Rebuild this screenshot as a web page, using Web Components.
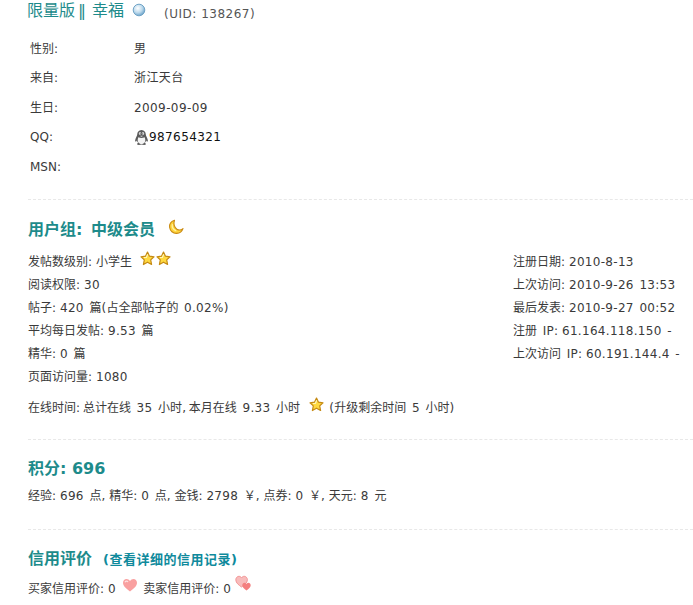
<!DOCTYPE html>
<html lang="zh"><head><meta charset="utf-8">
<style>
html,body{margin:0;padding:0;background:#fff}
body{font:12px/1.2 "DejaVu Sans","Noto Sans CJK SC",sans-serif;color:#3a3a3a;width:693px;height:605px;overflow:hidden}
</style></head><body>
<x-profile>
  <x-title>限量版<span slot="bar">‖</span><span slot="rest">幸福</span><x-ico slot="icon" name="orb"></x-ico><span slot="uid">(UID: 138267)</span></x-title>
  <x-info>
    <x-row label="性别:">男</x-row>
    <x-row label="来自:">浙江天台</x-row>
    <x-row label="生日:">2009-09-09</x-row>
    <x-row label="QQ:"><x-ico name="qq"></x-ico><span style="color:#111">987654321</span></x-row>
    <x-row label="MSN:"></x-row>
  </x-info>
  <x-sep style="--top:17px"></x-sep>
  <x-head style="--top:16px;--h:27px;word-spacing:3px">用户组: 中级会员<x-ico name="moon" style="margin-left:13px;vertical-align:0"></x-ico></x-head>
  <x-cols>
    <x-lines slot="left">
      <div data-w>发帖数级别: 小学生 <x-ico name="star" style="margin-left:2px;vertical-align:0"></x-ico><x-ico name="star" style="margin-left:1px;vertical-align:0"></x-ico></div>
      <div data-w>阅读权限: 30</div>
      <div data-w>帖子: 420 篇(占全部帖子的 0.02%)</div>
      <div data-w>平均每日发帖: 9.53 篇</div>
      <div data-w>精华: 0 篇</div>
      <div data-w>页面访问量: 1080</div>
    </x-lines>
    <x-lines slot="right">
      <div data-w>注册日期: 2010-8-13</div>
      <div data-w>上次访问: 2010-9-26 13:53</div>
      <div data-w>最后发表: 2010-9-27 00:52</div>
      <div data-w>注册 IP: 61.164.118.150 -</div>
      <div data-w>上次访问 IP: 60.191.144.4 -</div>
    </x-lines>
  </x-cols>
  <x-para data-w style="--top:7px;--tight:-1.5px">在线时间: 总计在线 35 小时, 本月在线 9.33 小时 <x-ico name="star" style="margin:0 0 0 3px;vertical-align:0"></x-ico> (升级剩余时间 5 小时)</x-para>
  <x-sep style="--top:22px"></x-sep>
  <x-head style="--top:17px;--h:24px">积分: 696</x-head>
  <x-para data-w style="--top:5px">经验: 696 点, 精华: 0 点, 金钱: 2798 ￥, 点券: 0 ￥, 天元: 8 元</x-para>
  <x-sep style="--top:23px"></x-sep>
  <x-head style="--top:17px;--h:24px">信用评价<a href="#" slot="link">(查看详细的信用记录)</a></x-head>
  <x-para data-w style="--top:4px">买家信用评价: 0 <x-ico name="heart" style="margin:0;vertical-align:1px"></x-ico> 卖家信用评价: 0 <x-ico name="hearts" style="margin-left:-2px;vertical-align:2px"></x-ico></x-para>
</x-profile>
<script>
const ICONS={
orb:[14,14,`<defs><radialGradient id="o" cx=".4" cy=".35" r=".7"><stop offset="0" stop-color="#fff"/><stop offset=".55" stop-color="#bcd9ec"/><stop offset="1" stop-color="#5f9bc4"/></radialGradient></defs><circle cx="7" cy="7" r="5.8" fill="url(#o)" stroke="#6fa3c6"/>`],
qq:[15,17,`<path d="M7.500 1C4.600 1 3.300 3.200 3.200 5.600 3.100 7.200 1.600 9 1.200 11c-.3 1.300.2 2 1 1.400l.7-.8c.2 1 .7 1.800 1.300 2.400-1 .4-1.400 1-1 1.500.7.6 2.800.4 4.300.1 1.500.3 3.600.5 4.300-.1.400-.5 0-1.100-1-1.500.6-.6 1.100-1.400 1.300-2.400l.7.8c.8.6 1.300-.1 1-1.400-.4-2-1.900-3.800-2-5.400C11.700 3.200 10.400 1 7.500 1z" fill="#5c5c5c"/><path d="M4.400 8.200c1.900 1 4.300 1 6.200 0 .8 1.500 1 3.600.2 5-.7 1.200-2 1.800-3.300 1.800s-2.600-.6-3.300-1.800c-.8-1.400-.6-3.500.2-5z" fill="#f4f4f4"/><ellipse cx="6" cy="4.600" rx="1.100" ry="1.400" fill="#fff"/><ellipse cx="9" cy="4.600" rx="1.100" ry="1.400" fill="#fff"/><circle cx="6.200" cy="4.800" r=".6" fill="#222"/><circle cx="8.800" cy="4.800" r=".6" fill="#222"/><path d="M5.800 6.700h3.400L7.500 8z" fill="#c9c9c9"/>`],
moon:[16,16,`<path d="M6.500 1.200C3.200 2.300 1.200 5 1.600 8.300c.4 3.600 3.500 6.300 7.100 6.100 3-.2 5.300-2 6.300-4.800-1.800 1.500-4.200 1.700-6.100.6C6.300 8.700 5.200 4.700 6.500 1.200z" fill="#ffd43a" stroke="#c98a12" stroke-width="1.100" stroke-linejoin="round"/><path d="M4.300 5.500c-.4 2.400.9 5 3.500 6.200" fill="none" stroke="#fff3a8" stroke-width="1.200" stroke-linecap="round"/>`],
star:[15,15,`<path d="M7.500 1l2 4.200 4.500.6-3.300 3.100.9 4.600-4.100-2.300-4.100 2.300.9-4.600L1 5.800l4.500-.6z" fill="#ffd940" stroke="#c58a14" stroke-width="1.200" stroke-linejoin="round"/><path d="M7.500 3.700 6.400 6.500H4.400" fill="none" stroke="#fff6b5" stroke-width="1.200" stroke-linecap="round"/>`],
heart:[16,14,`<path d="M8 13.500C4.800 11 1 8.400 1 4.800 1 2.600 2.700 1 4.500 1 5.900 1 7.200 1.800 8 3.100 8.800 1.800 10.100 1 11.500 1 13.300 1 15 2.600 15 4.800c0 3.600-3.800 6.200-7 8.700z" fill="#f9a0a0"/><path d="M3.200 3.800c.7-.9 1.800-.9 2.500-.3" fill="none" stroke="#fde0e0" stroke-width="1.200" stroke-linecap="round"/>`],
hearts:[17,16,`<path d="M6.500 12C3.800 10 .8 8 .8 4.800.8 2.800 2.300 1.300 3.900 1.300c1.100 0 2 .5 2.700 1.500.6-1 1.600-1.500 2.700-1.500 1.600 0 3.100 1.500 3.100 3.500 0 3.200-3.300 5.200-5.900 7.200z" fill="#f8bcbc" stroke="#f09090" stroke-width=".9"/><path d="M11.500 15.500C9.300 13.900 7.300 12.400 7.300 10.200 7.300 8.800 8.400 7.800 9.500 7.800c.8 0 1.500.4 2 1.200.5-.8 1.200-1.200 2-1.200 1.100 0 2.200 1 2.200 2.400 0 2.200-2 3.700-4.200 5.300z" fill="#f47f7f"/>`]
};
function def(name,html,init){customElements.define(name,class extends HTMLElement{constructor(){super();this.attachShadow({mode:'open'}).innerHTML=html;}connectedCallback(){init&&init(this)}})}
def('x-profile',`<style>:host{display:block;padding-left:28px}</style><slot></slot>`);
def('x-title',`<style>:host{display:flex;align-items:center;height:21px;margin-left:-1px;font-size:16px;color:#1d8b8b;white-space:nowrap}
::slotted([slot=bar]){margin:0 6px 0 3px}
::slotted(x-ico){margin:-1px 0 0 8px}
::slotted([slot=uid]){font-size:12px;color:#555;margin-left:18px;margin-top:8px;letter-spacing:.5px}</style><slot></slot><slot name="bar"></slot><slot name="rest"></slot><slot name="icon"></slot><slot name="uid"></slot>`);
def('x-info',`<style>:host{display:block;padding-top:13px}</style><slot></slot>`);
def('x-row',`<style>:host{display:flex;align-items:center;height:29.5px;padding-left:2px;color:#3a3a3a;white-space:nowrap;letter-spacing:.4px}
#l{width:104px;letter-spacing:0}#v{display:flex;align-items:center}</style><span id="l"></span><span id="v"><slot></slot></span>`,e=>e.shadowRoot.getElementById('l').textContent=e.getAttribute('label'));
def('x-sep',`<style>:host{display:block;height:0;border-top:1px dashed #e8e8e8;margin-top:var(--top,18px)}</style>`);
def('x-head',`<style>:host{display:block;margin-top:var(--top);height:var(--h);line-height:var(--h);font-size:16px;font-weight:bold;color:#1d8b8b;white-space:nowrap}
::slotted(a){font-size:13px;letter-spacing:.5px;color:#0f8a9c;text-decoration:none;margin-left:11px}
::slotted(x-ico){word-spacing:0}</style><slot></slot><slot name="link"></slot>`);
def('x-cols',`<style>:host{display:flex;margin-top:8px}#a{width:485px;flex:none}</style><div id="a"><slot name="left"></slot></div><div><slot name="right"></slot></div>`);
def('x-lines',`<style>:host{display:block;white-space:nowrap;color:#3a3a3a}::slotted(div){height:23.2px;line-height:23.2px}</style><slot></slot>`);
def('x-para',`<style>:host{display:block;margin-top:var(--top);height:20px;line-height:20px;color:#3a3a3a;white-space:nowrap}</style><slot></slot>`);
def('x-ico',`<style>:host{display:inline-block;vertical-align:-1px;line-height:0}svg{display:block}</style><span id="s"></span>`,e=>{const[w,h,p]=ICONS[e.getAttribute('name')];e.shadowRoot.getElementById('s').innerHTML=`<svg width="${w}" height="${h}" viewBox="0 0 ${w} ${h}">${p}</svg>`});
def('x-n',`<style>:host{display:inline;letter-spacing:.3px;word-spacing:1.5px}:host([tight]){word-spacing:var(--tight,-.5px)}</style><slot></slot>`);
// Latin runs are spaced a little wider than the CJK text around them; a space after , or : stays tight
document.querySelectorAll('[data-w]').forEach(el=>{
  [...el.childNodes].filter(n=>n.nodeType===3).forEach(n=>{
    const f=document.createDocumentFragment();
    n.textContent.split(/([\x20-\x7e]+)/).forEach((t,i)=>{
      if(!t)return;
      if(i%2===0){f.append(t);return}
      t.split(/([,:] )/).forEach((p,j)=>{
        if(!p)return;
        const x=document.createElement('x-n');x.textContent=p;
        if(j%2)x.setAttribute('tight','');
        f.append(x);
      });
    });
    n.replaceWith(f);
  });
});
</script>
</body></html>
